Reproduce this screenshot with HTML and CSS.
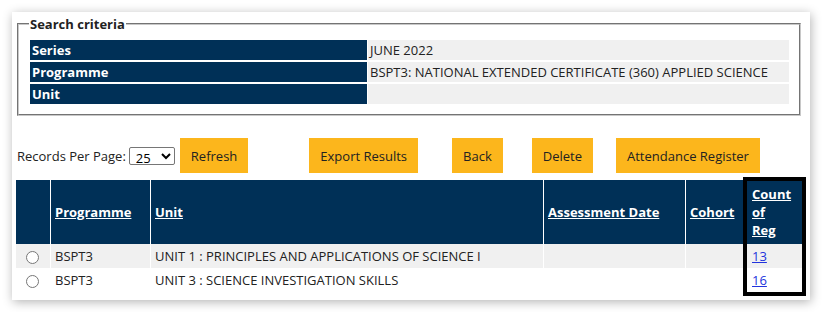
FILE: index.html
```
<!DOCTYPE html>
<html lang="en">

<head>
    <meta charset="UTF-8">
    <meta name="viewport" content="width=device-width, initial-scale=1.0">
    <title>Registrations</title>
    <link rel="stylesheet" href="styles.css">
</head>

<body>
    <div class="card">

        <!-- Search criteria -->
        <fieldset class="criteria">
            <legend>Search criteria</legend>
            <table class="criteria-table">
                <tr>
                    <th>Series</th>
                    <td>JUNE 2022</td>
                </tr>
                <tr>
                    <th>Programme</th>
                    <td>BSPT3: NATIONAL EXTENDED CERTIFICATE (360) APPLIED SCIENCE</td>
                </tr>
                <tr>
                    <th>Unit</th>
                    <td></td>
                </tr>
            </table>
        </fieldset>

        <!-- Toolbar -->
        <div class="toolbar">
            <label for="per-page">Records Per Page:</label>
            <select id="per-page" class="per-page">
                <option>25</option>
                <option>50</option>
                <option>100</option>
            </select>
            <button class="btn btn-refresh">Refresh</button>
            <button class="btn btn-export">Export Results</button>
            <button class="btn btn-back">Back</button>
            <button class="btn btn-delete">Delete</button>
            <button class="btn btn-register">Attendance Register</button>
        </div>

        <!-- Results -->
        <div class="results">
            <table class="results-table">
                <colgroup>
                    <col class="col-select">
                    <col class="col-programme">
                    <col class="col-unit">
                    <col class="col-date">
                    <col class="col-cohort">
                    <col class="col-count">
                </colgroup>
                <thead>
                    <tr>
                        <th></th>
                        <th><a href="#">Programme</a></th>
                        <th><a href="#">Unit</a></th>
                        <th><a href="#">Assessment Date</a></th>
                        <th><a href="#">Cohort</a></th>
                        <th class="count"><a href="#">Count of Reg</a></th>
                    </tr>
                </thead>
                <tbody>
                    <tr>
                        <td class="select"><input type="radio" name="row"></td>
                        <td>BSPT3</td>
                        <td>UNIT 1 : PRINCIPLES AND APPLICATIONS OF SCIENCE I</td>
                        <td></td>
                        <td></td>
                        <td class="count"><a href="#">13</a></td>
                    </tr>
                    <tr>
                        <td class="select"><input type="radio" name="row"></td>
                        <td>BSPT3</td>
                        <td>UNIT 3 : SCIENCE INVESTIGATION SKILLS</td>
                        <td></td>
                        <td></td>
                        <td class="count"><a href="#">16</a></td>
                    </tr>
                </tbody>
            </table>
            <div class="highlight"></div>
        </div>
    </div>
</body>

</html>
```

FILE: styles.css
```
body {
    font-family: "Open Sans", Arial, sans-serif;
    font-size: 13px;
    color: #222;
    background-color: #fff;
    margin: 0;
    padding: 0;
}

.card {
    width: 787px;
    margin: 12px;
    padding: 3px 8px 8px 3px;
    background: #fff;
    box-shadow: 1px 2px 10px rgba(0, 0, 0, 0.3);
}

/* Search criteria */
.criteria {
    margin: 0 1px 0 2px;
    padding: 2px 10px 8px 11px;
    border: 2px groove #c8c8c8;
}

.criteria legend {
    padding: 0 1px;
    margin-left: -1px;
    font-weight: bold;
    line-height: 18px;
}

.criteria-table {
    width: 100%;
    border-spacing: 0 2px;
    margin-top: 3px;
}

.criteria-table th,
.criteria-table td {
    height: 20px;
    padding: 0 0 0 2px;
    line-height: 20px;
    text-align: left;
}

.criteria-table th {
    width: 335px;
    background-color: #003057;
    color: #fff;
    border-right: 1px solid #fff;
}

.criteria-table td {
    background-color: #f0f0f0;
}

/* Toolbar */
.toolbar {
    display: flex;
    align-items: center;
    margin: 22px 0 7px 2px;
}

.per-page {
    width: 46px;
    height: 18px;
    margin-left: 3px;
    padding: 0 0 0 2px;
    font-family: "Open Sans", Arial, sans-serif;
    font-size: 13px;
    border: 1px solid #767676;
    border-radius: 2px;
    background: #fff;
}

.btn {
    height: 35px;
    padding: 0 11px;
    background-color: #fcb61c;
    color: #222;
    border: none;
    font-family: "Open Sans", Arial, sans-serif;
    font-size: 13px;
    cursor: pointer;
}

.btn-refresh {
    margin-left: 5px;
}

.btn-export {
    margin-left: 61px;
}

.btn-back {
    margin-left: 34px;
}

.btn-delete {
    margin-left: 29px;
}

.btn-register {
    margin-left: 23px;
}

/* Results */
.results {
    position: relative;
}

.results-table {
    width: 788px;
    table-layout: fixed;
    border-collapse: collapse;
}

.col-select { width: 35px; }
.col-programme { width: 100px; }
.col-unit { width: 393px; }
.col-date { width: 142px; }
.col-cohort { width: 61px; }
.col-count { width: 57px; }

.results-table th,
.results-table td {
    border: 1px solid #fff;
    border-top: none;
    border-bottom: none;
    text-align: left;
}

.results-table th {
    height: 64px;
    padding: 0 4px;
    background-color: #003057;
    line-height: 18px;
}

.results-table th a {
    color: #fff;
    font-weight: bold;
}

.results-table th.count {
    padding: 0 12px 0 5px;
}

.results-table td {
    height: 24px;
    padding: 0 4px;
    line-height: 18px;
}

.results-table tbody tr:nth-child(odd) td {
    background-color: #f0f0f0;
}

.results-table td.select {
    text-align: center;
}

.results-table td.select input {
    width: 13px;
    height: 13px;
    margin: 0 0 0 -1px;
    vertical-align: middle;
}

.results-table td.count {
    padding-left: 5px;
}

.results-table td.count a {
    color: #2233dd;
}

.highlight {
    position: absolute;
    left: 728px;
    top: -3px;
    width: 55px;
    height: 111px;
    border: 4px solid #000;
}
```
